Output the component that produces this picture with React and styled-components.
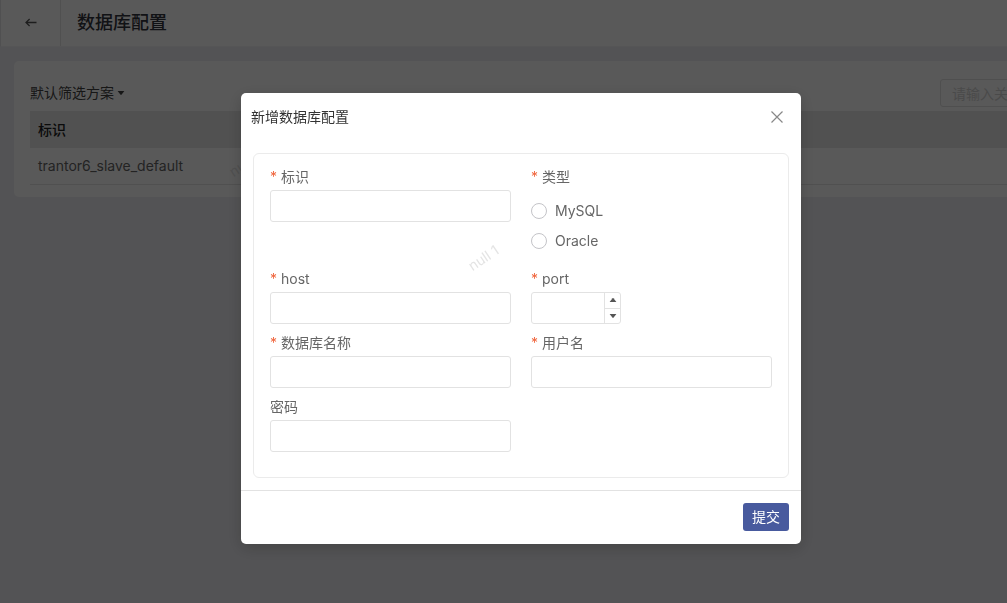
import { useState } from 'react';
import styled, { createGlobalStyle } from 'styled-components';

const GlobalStyle = createGlobalStyle`
  * {
    box-sizing: border-box;
  }

  body {
    margin: 0;
    min-height: 100vh;
    overflow: hidden;
    background: #eeeef3;
    color: #666;
    font: 14px/20px Inter, 'Noto Sans CJK SC', sans-serif;
  }

  button,
  input {
    font: inherit;
  }
`;

// The list is wider than a small window, the right part is cut off
const Page = styled.div`
  min-width: 1140px;
`;

const Header = styled.header`
  display: flex;
  height: 47px;
  background: #fff;
  border-bottom: 1px solid #f4f4f6;
  border-left: 1px solid #e4e4e8;
`;

const BackButton = styled.button`
  display: flex;
  align-items: center;
  justify-content: center;
  width: 60px;
  padding: 0;
  border: 0;
  border-right: 1px solid #e4e4e4;
  background: none;
  color: #555;
`;

const Title = styled.h1`
  margin: 0;
  padding-left: 16px;
  color: #33353d;
  font-size: 18px;
  font-weight: 500;
  line-height: 46px;
`;

const Card = styled.section`
  position: relative;
  margin: 14px;
  padding: 18px 16px 12px;
  border-radius: 5px;
  background: #fff;
`;

const Toolbar = styled.div`
  display: flex;
  align-items: center;
  justify-content: space-between;
  margin-bottom: 4px;
`;

const FilterButton = styled.button`
  display: flex;
  align-items: center;
  gap: 3px;
  padding: 0;
  border: 0;
  background: none;
  color: #444;
`;

const Search = styled.input`
  width: 170px;
  height: 28px;
  padding: 0 11px;
  border: 1px solid #e2e2e2;
  border-radius: 3px;
  background: #fff;

  &::placeholder {
    color: #d4d4d4;
  }
`;

const Table = styled.table`
  width: 100%;
  border-spacing: 0;
  text-align: left;
`;

const HeadCell = styled.th`
  height: 37px;
  padding: 0 8px;
  background: #e8e8e8;
  color: #222;
  font-weight: 500;
`;

const Cell = styled.td`
  height: 37px;
  padding: 0 8px;
  border-bottom: 1px solid #e4e4e4;
`;

const Watermark = styled.span`
  position: absolute;
  left: ${props => props.$left}px;
  top: ${props => props.$top}px;
  color: #e4e4e4;
  font-size: 14px;
  transform: rotate(-34deg);
  pointer-events: none;
`;

const Overlay = styled.div`
  position: fixed;
  inset: 0;
  display: flex;
  align-items: flex-start;
  justify-content: center;
  padding: 93px 0 0 35px;
  background: rgba(0, 0, 0, 0.65);
`;

const Dialog = styled.div`
  position: relative;
  width: 560px;
  border-radius: 5px;
  background: #fff;
  box-shadow: 0 4px 16px rgba(0, 0, 0, 0.2);
`;

const DialogHeader = styled.div`
  display: flex;
  align-items: center;
  justify-content: space-between;
  height: 48px;
  padding: 0 16px 0 10px;
`;

const DialogTitle = styled.h2`
  margin: 0;
  color: #333;
  font-size: 14px;
  font-weight: 400;
`;

const CloseButton = styled.button`
  display: flex;
  padding: 0;
  border: 0;
  background: none;
  color: #888;
`;

const DialogBody = styled.div`
  padding: 12px;
`;

const Panel = styled.div`
  display: grid;
  grid-template-columns: 1fr 1fr;
  column-gap: 20px;
  padding: 10px 16px 19px;
  border: 1px solid #ebebeb;
  border-radius: 6px;
`;

const Field = styled.div`
  margin-bottom: 6px;
`;

const Label = styled.label`
  display: block;
  line-height: 26px;
`;

const Star = styled.span`
  margin-right: 4px;
  color: #f0643c;
`;

const TextInput = styled.input`
  display: block;
  width: 100%;
  height: 32px;
  padding: 0 8px;
  border: 1px solid #e2e2e2;
  border-radius: 3px;
  background: #fff;
  outline: 0;
`;

const RadioList = styled.div`
  padding: 6px 0 4px;
`;

const RadioLabel = styled.label`
  display: flex;
  align-items: center;
  gap: 8px;
  height: 30px;
`;

const Radio = styled.input`
  appearance: none;
  width: 16px;
  height: 16px;
  margin: 0;
  border: 1px solid #c4c4c8;
  border-radius: 50%;
  background: #fff;

  &:checked {
    border: 5px solid #485a9e;
  }
`;

const NumberBox = styled.div`
  display: flex;
  width: 90px;
  height: 32px;
  border: 1px solid #e2e2e2;
  border-radius: 3px;
`;

const NumberInput = styled.input`
  flex: 1;
  min-width: 0;
  padding: 0 8px;
  border: 0;
  background: none;
  outline: 0;
  appearance: textfield;

  &::-webkit-inner-spin-button {
    display: none;
  }
`;

const Steps = styled.div`
  display: flex;
  flex-direction: column;
  width: 16px;
  border-left: 1px solid #e2e2e2;
`;

const StepButton = styled.button`
  display: flex;
  flex: 1;
  align-items: center;
  justify-content: center;
  padding: 0;
  border: 0;
  background: none;
  color: #555;

  & + & {
    border-top: 1px solid #e2e2e2;
  }
`;

const DialogFooter = styled.div`
  display: flex;
  justify-content: flex-end;
  padding: 12px 12px 13px;
  border-top: 1px solid #e2e2e2;
`;

const SubmitButton = styled.button`
  height: 28px;
  padding: 0 9px;
  border: 0;
  border-radius: 3px;
  background: #485a9e;
  color: #fff;
`;

const BackIcon = () => (
  <svg width="12" height="10" viewBox="0 0 12 10" fill="none" stroke="currentColor" strokeWidth="1.3">
    <path d="M11.5 4.5H1M4.6 1L1 4.5 4.6 8" />
  </svg>
);

const CloseIcon = () => (
  <svg width="16" height="16" viewBox="0 0 16 16" fill="none" stroke="currentColor" strokeWidth="1.2">
    <path d="M2.5 2.5l11 11M13.5 2.5l-11 11" />
  </svg>
);

const Caret = ({ up, size = 8 }) => (
  <svg width={size} height={size / 2} viewBox="0 0 8 4" fill="currentColor">
    <path d={up ? 'M0.6 4h6.8L4.4.3a.6.6 0 0 0-.8 0z' : 'M0.6 0h6.8L4.4 3.7a.6.6 0 0 1-.8 0z'} />
  </svg>
);

const FormField = ({ id, label, required, children }) => (
  <Field>
    <Label htmlFor={id}>
      {required && <Star>*</Star>}
      {label}
    </Label>
    {children}
  </Field>
);

const TypeField = () => (
  <Field role="radiogroup" aria-labelledby="type-label">
    <Label as="div" id="type-label">
      <Star>*</Star>
      类型
    </Label>
    <RadioList>
      {['MySQL', 'Oracle'].map(type => (
        <RadioLabel key={type}>
          <Radio type="radio" name="type" value={type} />
          {type}
        </RadioLabel>
      ))}
    </RadioList>
  </Field>
);

const PortField = () => {
  const [port, setPort] = useState('');

  return (
    <FormField id="port" label="port" required>
      <NumberBox>
        <NumberInput id="port" type="number" value={port} onChange={e => setPort(e.target.value)} />
        <Steps>
          <StepButton type="button" aria-label="+1" onClick={() => setPort(Number(port) + 1)}>
            <Caret up />
          </StepButton>
          <StepButton type="button" aria-label="-1" onClick={() => setPort(Number(port) - 1)}>
            <Caret />
          </StepButton>
        </Steps>
      </NumberBox>
    </FormField>
  );
};

const ConfigDialog = () => (
  <Dialog role="dialog" aria-labelledby="dialog-title">
    <DialogHeader>
      <DialogTitle id="dialog-title">新增数据库配置</DialogTitle>
      <CloseButton type="button" aria-label="关闭">
        <CloseIcon />
      </CloseButton>
    </DialogHeader>
    <form onSubmit={e => e.preventDefault()}>
      <DialogBody>
        <Panel>
          <FormField id="key" label="标识" required>
            <TextInput id="key" />
          </FormField>
          <TypeField />
          <FormField id="host" label="host" required>
            <TextInput id="host" />
          </FormField>
          <PortField />
          <FormField id="database" label="数据库名称" required>
            <TextInput id="database" />
          </FormField>
          <FormField id="user" label="用户名" required>
            <TextInput id="user" />
          </FormField>
          <FormField id="password" label="密码">
            <TextInput id="password" type="password" />
          </FormField>
        </Panel>
      </DialogBody>
      <DialogFooter>
        <SubmitButton>提交</SubmitButton>
      </DialogFooter>
    </form>
    <Watermark $left={226} $top={155}>null 1</Watermark>
  </Dialog>
);

export default function App() {
  return (
    <>
      <GlobalStyle />
      <Page>
        <Header>
          <BackButton type="button" aria-label="返回">
            <BackIcon />
          </BackButton>
          <Title>数据库配置</Title>
        </Header>
        <Card>
          <Toolbar>
            <FilterButton type="button">
              默认筛选方案
              <Caret />
            </FilterButton>
            <Search placeholder="请输入关键字" aria-label="请输入关键字" />
          </Toolbar>
          <Table>
            <thead>
              <tr>
                <HeadCell>标识</HeadCell>
              </tr>
            </thead>
            <tbody>
              <tr>
                <Cell>trantor6_slave_default</Cell>
              </tr>
            </tbody>
          </Table>
          <Watermark $left={214} $top={93}>null 1</Watermark>
        </Card>
      </Page>
      <Overlay>
        <ConfigDialog />
      </Overlay>
    </>
  );
}
